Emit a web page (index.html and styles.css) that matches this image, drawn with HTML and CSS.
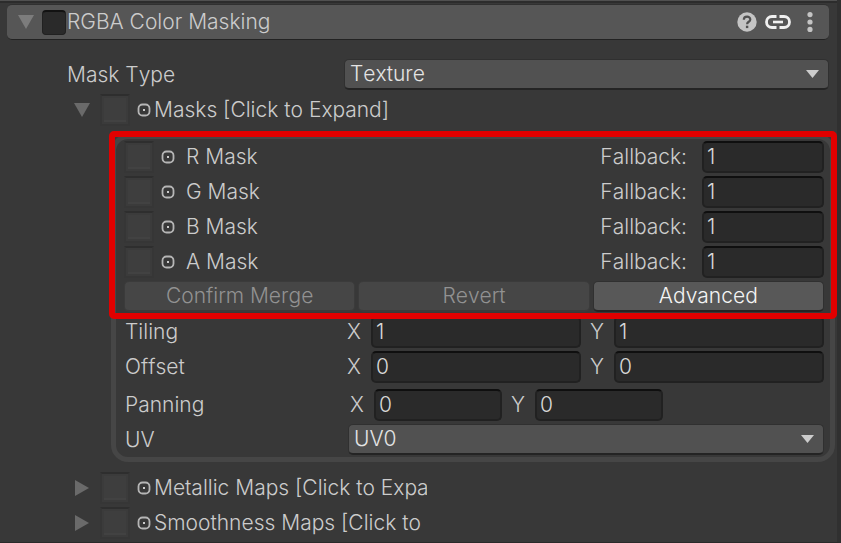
FILE: index.html
```html
<!DOCTYPE html>
<html lang="en">
<head>
<meta charset="utf-8">
<title>RGBA Color Masking</title>
<link rel="stylesheet" href="styles.css">
</head>
<body>
<svg class="defs" aria-hidden="true">
  <symbol id="down" viewBox="0 0 16 14"><path d="M0 0H16L8 14Z" fill="currentColor"/></symbol>
  <symbol id="right" viewBox="0 0 14 16"><path d="M0 0V16L14 8Z" fill="currentColor"/></symbol>
  <symbol id="caret" viewBox="0 0 13 8"><path d="M0 0H13L6.500 8Z" fill="currentColor"/></symbol>
  <symbol id="pick" viewBox="0 0 14 14"><rect x="1.500" y="1.500" width="11" height="11" rx="4" fill="none" stroke="currentColor" stroke-width="1.800" stroke-opacity="0.850"/><rect x="6" y="6" width="2" height="2" fill="currentColor"/></symbol>
</svg>
<main class="inspector">
  <header class="header">
    <button class="fold" aria-label="Collapse section"><svg class="tri-down"><use href="#down"/></svg></button>
    <input class="toggle" type="checkbox" id="enable">
    <label class="title" for="enable">RGBA Color Masking</label>
    <button class="tool" aria-label="Help"><svg width="20" height="20" viewBox="0 0 20 20"><circle cx="10" cy="10" r="9.700" fill="#c4c4c4"/><path d="M6.800 7.800C6.800 3.700 13.300 3.800 13.300 7.400C13.300 9.800 10.100 9.700 10.100 12.200" fill="none" stroke="#505050" stroke-width="2.200"/><rect x="8.900" y="13.700" width="2.400" height="2.400" fill="#505050"/></svg></button>
    <button class="tool" aria-label="Link"><svg width="26" height="14" viewBox="0 0 26 14"><path d="M11.500 1.500H7A5.500 5.500 0 0 0 7 12.500H11.500M14.500 1.500H19A5.500 5.500 0 0 1 19 12.500H14.500" fill="none" stroke="#f0f0f0" stroke-width="2.800"/><path d="M8 7H18" stroke="#f0f0f0" stroke-width="2.600"/></svg></button>
    <button class="tool" aria-label="More"><svg width="6" height="20" viewBox="0 0 6 20"><g fill="#c4c4c4"><circle cx="3" cy="2.600" r="2.600"/><circle cx="3" cy="10" r="2.600"/><circle cx="3" cy="17.400" r="2.600"/></g></svg></button>
  </header>

  <div class="row mask-type">
    <label class="name" for="mask-type">Mask Type</label>
    <span class="drop"><select id="mask-type"><option>Texture</option></select><svg class="caret"><use href="#caret"/></svg></span>
  </div>

  <div class="row section">
    <button class="fold" aria-label="Collapse masks"><svg class="tri-down"><use href="#down"/></svg></button>
    <button class="slot" aria-label="Masks texture"></button>
    <svg class="pick"><use href="#pick"/></svg>
    <span>Masks [Click to Expand]</span>
  </div>

  <section class="group">
    <div class="masks">
      <div class="row">
        <button class="slot" aria-label="R texture"></button><svg class="pick"><use href="#pick"/></svg>
        <span class="channel">R Mask</span><label for="r">Fallback:</label><input class="field" id="r" value="1">
      </div>
      <div class="row">
        <button class="slot" aria-label="G texture"></button><svg class="pick"><use href="#pick"/></svg>
        <span class="channel">G Mask</span><label for="g">Fallback:</label><input class="field" id="g" value="1">
      </div>
      <div class="row">
        <button class="slot" aria-label="B texture"></button><svg class="pick"><use href="#pick"/></svg>
        <span class="channel">B Mask</span><label for="b">Fallback:</label><input class="field" id="b" value="1">
      </div>
      <div class="row">
        <button class="slot" aria-label="A texture"></button><svg class="pick"><use href="#pick"/></svg>
        <span class="channel">A Mask</span><label for="a">Fallback:</label><input class="field" id="a" value="1">
      </div>
      <div class="row actions">
        <button class="action" disabled>Confirm Merge</button>
        <button class="action" disabled>Revert</button>
        <button class="action">Advanced</button>
      </div>
      <div class="highlight"></div>
    </div>
    <div class="row vector">
      <span class="name">Tiling</span>
      <label for="tx">X</label><input class="field" id="tx" value="1">
      <label for="ty">Y</label><input class="field" id="ty" value="1">
    </div>
    <div class="row vector">
      <span class="name">Offset</span>
      <label for="ox">X</label><input class="field" id="ox" value="0">
      <label for="oy">Y</label><input class="field" id="oy" value="0">
    </div>
    <div class="row vector panning">
      <span class="name">Panning</span>
      <label for="px">X</label><input class="field" id="px" value="0">
      <label for="py">Y</label><input class="field" id="py" value="0">
    </div>
    <div class="row uv">
      <label class="name" for="uv">UV</label>
      <span class="drop"><select id="uv"><option>UV0</option></select><svg class="caret"><use href="#caret"/></svg></span>
    </div>
  </section>

  <div class="row section">
    <button class="fold" aria-label="Expand metallic maps"><svg class="tri-right"><use href="#right"/></svg></button>
    <button class="slot" aria-label="Metallic texture"></button>
    <svg class="pick"><use href="#pick"/></svg>
    <span class="clipped">Metallic Maps [Click to Expand]</span>
  </div>
  <div class="row section">
    <button class="fold" aria-label="Expand smoothness maps"><svg class="tri-right"><use href="#right"/></svg></button>
    <button class="slot" aria-label="Smoothness texture"></button>
    <svg class="pick"><use href="#pick"/></svg>
    <span class="clipped">Smoothness Maps [Click to Expand]</span>
  </div>
</main>
</body>
</html>
```
FILE: styles.css
```css
* { box-sizing: border-box; }

body {
  margin: 0;
  background: #383838;
  color: #cccccc;
  font: 300 21px/28px Inter, "Liberation Sans", sans-serif;
  font-kerning: none;
}

button, input, select {
  margin: 0;
  padding: 0;
  border: 0;
  background: none;
  color: inherit;
  font: inherit;
  font-kerning: none;
}

svg { display: block; }

.defs { position: absolute; width: 0; height: 0; }

.inspector {
  min-height: 100vh;
  padding-top: 4px;
  border-right: 4px solid #303030;
  border-bottom: 1px solid #2a2a2a;
  background: linear-gradient(#505050 0 1px, #2c2c2c 1px 3px, #383838 3px);
}

.header {
  display: flex;
  align-items: center;
  height: 36px;
  margin: 0 8px 17px 7px;
  padding: 0 16px 0 11px;
  border-top: 1px solid #303030;
  border-bottom: 1px solid #222;
  border-radius: 5px;
  background: #565656;
}

.header .fold { color: #7c7c7c; }

.toggle {
  appearance: none;
  width: 24px;
  height: 25px;
  margin-left: 8px;
  border: 1px solid #212121;
  border-top: 2px solid #121212;
  border-radius: 4px;
  background: #2a2a2a;
}

.title { flex: 1; margin-left: 1px; }
.tool { margin-left: 8px; }
.tool + .tool + .tool { margin-left: 16px; }

.tri-down { width: 16px; height: 14px; }
.tri-right { width: 14px; height: 16px; margin-left: 1px; }

.fold { width: 16px; color: #6a6a6a; }

.row {
  display: flex;
  align-items: center;
  height: 35px;
}

.name { flex: none; white-space: nowrap; }

.mask-type { padding: 0 8px 0 67px; }
.mask-type .name { width: 277px; }

.section { padding-left: 74px; }
.section .fold { margin-right: 10px; }
.section .pick { margin: 0 3px 0 7px; }

.clipped { width: 273px; overflow: hidden; white-space: nowrap; }

.slot {
  flex: none;
  width: 30px;
  height: 32px;
  border: 2px solid #363636;
  border-top-color: #2e2e2e;
  background: #3e3e3e;
  box-shadow: inset 0 0 0 2px #3b3b3b, inset 0 -2px 0 2px #424242;
}

.pick { flex: none; width: 14px; height: 14px; }

.drop { position: relative; flex: 1; }

.drop select {
  appearance: none;
  display: block;
  width: 100%;
  height: 31px;
  padding: 0 30px 2px 5px;
  border: 1px solid #303030;
  border-bottom: 2px solid #242424;
  border-radius: 5px;
  background: #515151;
  color: #e4e4e4;
}

.caret {
  position: absolute;
  top: 11px;
  right: 10px;
  width: 13px;
  height: 8px;
  pointer-events: none;
}

.group {
  margin: 7px 2px 8px 111px;
  padding: 0 6px 0 8px;
  border: 5px solid #464646;
  border-radius: 17px;
}

.masks { position: relative; }
.masks .pick { margin: 0 11px 0 7px; }
.channel { flex: 1; }

.highlight {
  position: absolute;
  inset: -8px -13px -5px -15px;
  border: 6px solid #e10000;
  border-radius: 5px;
  pointer-events: none;
}

.field {
  min-width: 0;
  height: 32px;
  padding: 0 3px 1px;
  border: 2px solid #212121;
  border-top-color: #0f0f0f;
  border-radius: 5px;
  background: #2a2a2a;
  color: #d8d8d8;
}

.masks .field { width: 122px; margin-left: 15px; }

.actions { gap: 3px; }

.action {
  flex: 1;
  height: 31px;
  border: 1px solid #303030;
  border-bottom: 2px solid #242424;
  border-radius: 5px;
  background: #585858;
  color: #f4f4f4;
}

.action:disabled {
  border-color: #3b3b3b;
  background: #464646;
  color: #929292;
}

.vector .name { width: 223px; }
.vector label { width: 24px; }
.vector .field { flex: 1; }
.vector .field + label { margin-left: 9px; }

.panning { margin-top: 3px; }
.panning .name { width: 226px; }
.panning .field { flex: none; width: 128px; }

.uv .name { width: 224px; }

.vector .name, .uv .name { padding-left: 1px; }
```
